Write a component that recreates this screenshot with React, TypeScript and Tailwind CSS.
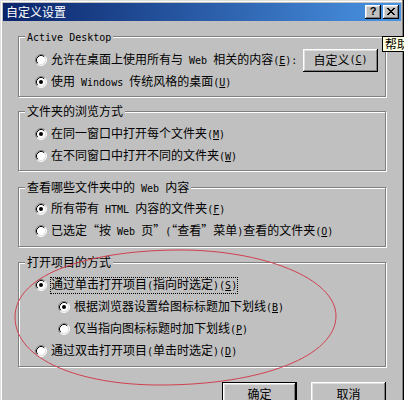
import React from "react";

function Txt({ s }: { s: string }) {
  const parts: React.ReactNode[] = [];
  let i = 0;
  let key = 0;
  let buf = "";
  let bufAscii: boolean | null = null;
  const flush = () => {
    if (!buf) return;
    parts.push(
      bufAscii ? (
        <span key={key++} className="font-['DejaVu_Sans_Mono',monospace] text-[10px]">
          {buf}
        </span>
      ) : (
        <span key={key++}>{buf}</span>
      )
    );
    buf = "";
  };
  while (i < s.length) {
    const c = s[i];
    if (c === "&") {
      flush();
      bufAscii = null;
      parts.push(
        <span key={key++} className="font-['DejaVu_Sans_Mono',monospace] text-[10px] underline underline-offset-1">
          {s[i + 1]}
        </span>
      );
      i += 2;
      continue;
    }
    const a = c.charCodeAt(0) < 128;
    if (bufAscii !== null && a !== bufAscii) flush();
    bufAscii = a;
    buf += c;
    i++;
  }
  flush();
  return <>{parts}</>;
}

function Radio({ on }: { on?: boolean }) {
  return (
    <svg width="12" height="12" viewBox="0 0 12 12" className="shrink-0 block">
      <circle cx="6" cy="6" r="5" fill="#fff" />
      <path d="M2.11 9.89A5.5 5.5 0 0 1 9.89 2.11" stroke="#808080" fill="none" />
      <path d="M9.89 2.11A5.5 5.5 0 0 1 2.11 9.89" stroke="#fff" fill="none" />
      <path d="M2.82 9.18A4.5 4.5 0 0 1 9.18 2.82" stroke="#000" fill="none" />
      <path d="M9.18 2.82A4.5 4.5 0 0 1 2.82 9.18" stroke="#dfdfdf" fill="none" />
      {on && <circle cx="6" cy="6" r="2" fill="#000" />}
    </svg>
  );
}

function Row({ on, s, indent, h = "h-[22px]" }: { on?: boolean; s: string; indent?: boolean; h?: string }) {
  return (
    <div className={`flex items-center ${h} ${indent ? "pl-[39px]" : "pl-[16px]"}`}>
      <Radio on={on} />
      <span className="ml-[4px] whitespace-pre leading-[14px]">
        <Txt s={s} />
      </span>
    </div>
  );
}

function Group({
  label,
  className,
  children,
}: {
  label: string;
  className: string;
  children: React.ReactNode;
}) {
  return (
    <div
      className={`relative w-[368px] border border-[#808080] shadow-[inset_1px_1px_0_#fff,1px_1px_0_#fff] ${className}`}
    >
      <span className="absolute left-[6px] top-[-8px] bg-[#c0c0c0] px-[2px] leading-[14px] whitespace-pre">
        <Txt s={label} />
      </span>
      {children}
    </div>
  );
}

const btn3d =
  "shadow-[inset_-1px_-1px_0_#000,inset_1px_1px_0_#fff,inset_-2px_-2px_0_#808080,inset_2px_2px_0_#dfdfdf]";

export default function App() {
  return (
    <div className="relative w-[404px] h-[400px] overflow-hidden bg-[#c0c0c0] text-[12px] text-black font-['Noto_Sans_CJK_SC',sans-serif] shadow-[inset_-1px_0_0_#000,inset_-2px_0_0_#808080,inset_1px_1px_0_#dfdfdf,inset_2px_2px_0_#fff]">
      {/* title bar */}
      <div className="mx-[3px] mt-[3px] h-[18px] flex items-center bg-[linear-gradient(to_right,#0a246a,#4a94e4)] pl-[3px] pr-[2px]">
        <span className="text-white text-[12px] leading-[14px]">自定义设置</span>
        <div className="ml-auto flex gap-[2px]">
          <div className={`w-[16px] h-[14px] bg-[#c0c0c0] ${btn3d} flex items-center justify-center`}>
            <span className="font-['Liberation_Sans',sans-serif] font-bold text-[11px] leading-[11px] mt-[-1px]">?</span>
          </div>
          <div className={`w-[16px] h-[14px] bg-[#c0c0c0] ${btn3d} flex items-center justify-center`}>
            <svg width="8" height="7" viewBox="0 0 8 7" className="mt-[-1px]">
              <path
                d="M0 0h2v1h1v1h2v-1h1v-1h2v1h-1v1h-1v1h-1v1h1v1h1v1h1v1h-2v-1h-1v-1h-2v1h-1v1h-2v-1h1v-1h1v-1h1v-1h-1v-1h-1v-1h-1z"
                fill="#000"
              />
            </svg>
          </div>
        </div>
      </div>

      <div className="pl-[18px] flex flex-col">
        <Group label="Active Desktop" className="mt-[15px] h-[61px] pt-[11px]">
          <div className="flex items-center h-[24px] pl-[16px] pr-[7px]">
            <Radio />
            <span className="ml-[4px] whitespace-pre leading-[14px]">
              <Txt s="允许在桌面上使用所有与 Web 相关的内容(&E):" />
            </span>
            <div className={`ml-auto w-[75px] h-[23px] ${btn3d} flex items-center justify-center whitespace-pre leading-[14px]`}>
              <Txt s="自定义(&C)" />
            </div>
          </div>
          <Row on s="使用 Windows 传统风格的桌面(&U)" h="h-[20px]" />
        </Group>

        <Group label="文件夹的浏览方式" className="mt-[14px] h-[60px] pt-[11px]">
          <Row on s="在同一窗口中打开每个文件夹(&M)" />
          <Row s="在不同窗口中打开不同的文件夹(&W)" />
        </Group>

        <Group label="查看哪些文件夹中的 Web 内容" className="mt-[16px] h-[60px] pt-[10px]">
          <Row on s="所有带有 HTML 内容的文件夹(&F)" />
          <Row s="已选定“按 Web 页”(“查看”菜单)查看的文件夹(&O)" />
        </Group>

        <Group label="打开项目的方式" className="mt-[15px] h-[105px] pt-[11px]">
          <div className="flex items-center h-[22px] pl-[16px]">
            <Radio on />
            <span className="ml-[3px] h-[17px] flex items-center border border-dotted border-black whitespace-pre leading-[14px]">
              <span>
                <Txt s="通过单击打开项目(指向时选定)(&S)" />
              </span>
            </span>
          </div>
          <Row on indent s="根据浏览器设置给图标标题加下划线(&B)" />
          <Row indent s="仅当指向图标标题时加下划线(&P)" />
          <Row s="通过双击打开项目(单击时选定)(&D)" />
        </Group>

        <div className="w-[368px] mt-[15px] flex justify-end gap-[14px]">
          <div className={`w-[75px] h-[23px] border border-black ${btn3d} flex items-center justify-center leading-[14px]`}>
            确定
          </div>
          <div className={`w-[75px] h-[23px] ${btn3d} flex items-center justify-center leading-[14px]`}>
            取消
          </div>
        </div>
      </div>

      {/* tooltip, clipped by the screenshot's right edge as in the reference */}
      <div className="absolute left-[382px] top-[36px] h-[16px] bg-[#ffffe1] border border-black pl-[2px] pr-[4px] flex items-center whitespace-nowrap leading-[14px]">
        帮助
      </div>

      {/* red annotation ellipse */}
      <svg className="absolute inset-0 pointer-events-none" width="404" height="400" viewBox="0 0 404 400">
        <path
          d="M15 318C14 272 95 250 180 250C262 250 336 278 336 316C336 356 262 385 160 385C80 385 16 360 15 318Z"
          fill="none"
          stroke="#d0404f"
          strokeWidth="1"
        />
      </svg>
    </div>
  );
}
